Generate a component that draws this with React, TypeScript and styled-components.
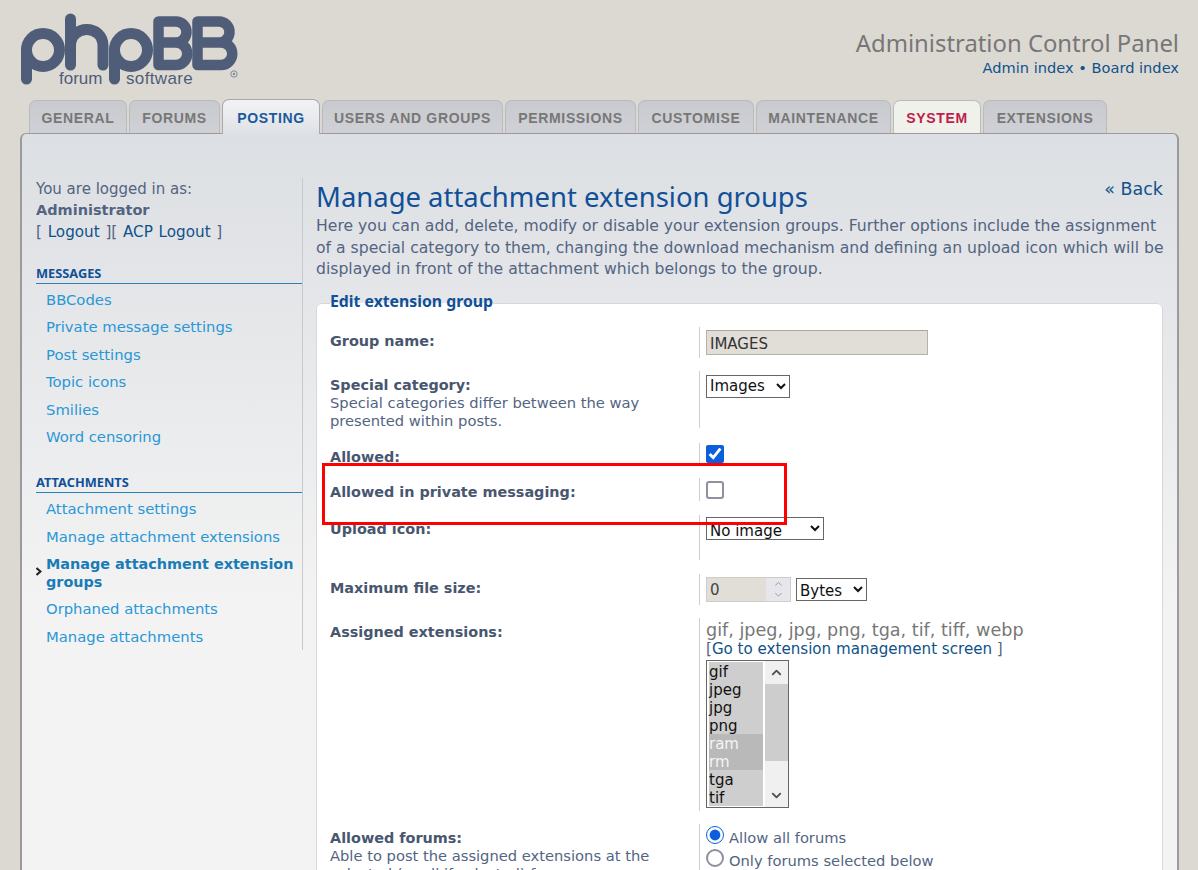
import React from 'react'
import styled, { createGlobalStyle } from 'styled-components'
import { ChevronUp, ChevronDown } from 'lucide-react'

const GlobalStyle = createGlobalStyle`
  html, body {
    margin: 0;
    padding: 0;
    height: 870px;
    overflow: hidden;
    background: #dcd9d3;
    font-family: "DejaVu Sans", Verdana, sans-serif;
    color: #536482;
  }
  * { box-sizing: border-box; }
  a { text-decoration: none; color: inherit; }
`

const Page = styled.div`
  position: relative;
  width: 1198px;
  height: 870px;
  overflow: hidden;
  padding: 0 19px 0 20px;
`

const Header = styled.header`
  display: flex;
  justify-content: space-between;
  height: 100px;
  padding-top: 13px;
`

const Logo = styled.svg`
  display: block;
  width: 225px;
  height: 76px;
`

const HeaderRight = styled.div`
  text-align: right;
  padding-top: 14px;
`

const SiteTitle = styled.div`
  font-family: "Noto Sans", "Open Sans", sans-serif;
  font-size: 23.85px;
  line-height: 32px;
  color: #777;
`

const SiteLinks = styled.div`
  font-size: 14.6px;
  line-height: 18px;
  color: #105289;
`

const Tabs = styled.nav`
  display: flex;
  gap: 2px;
  height: 33px;
  padding-left: 9px;
  position: relative;
  z-index: 1;
`

const Tab = styled.a<{ $active?: boolean; $system?: boolean; $w: number }>`
  display: block;
  width: ${(p) => p.$w}px;
  height: ${(p) => (p.$active ? 35 : 33)}px;
  margin-top: ${(p) => (p.$active ? -1 : 0)}px;
  text-align: center;
  font-family: "Liberation Sans", Arial, sans-serif;
  font-weight: bold;
  font-size: 14px;
  letter-spacing: 0.65px;
  line-height: ${(p) => (p.$active ? 36 : 34)}px;
  border-radius: 7px 7px 0 0;
  border: 1px solid #b9bbbf;
  border-bottom: 0;
  color: ${(p) => (p.$system ? '#bf1e4b' : p.$active ? '#1a5a9c' : '#777')};
  background: ${(p) =>
    p.$system
      ? '#f1f1ec'
      : p.$active
        ? 'linear-gradient(#f3f3f5, #dfe1e5)'
        : 'linear-gradient(#c9cace, #d0d1d6)'};
  ${(p) => p.$active && 'border-color: #a9a9a9;'}
`

const Panel = styled.div`
  display: flex;
  height: 780px;
  border: 1px solid #9b9b9b;
  border-left-width: 2px;
  border-right-width: 2px;
  border-bottom: 0;
  border-radius: 6px 6px 0 0;
  background: linear-gradient(#dcdfe3 0, #f3f3f3 470px);
  padding: 44px 14px 0 14px;
`

const Sidebar = styled.aside`
  width: 267px;
  height: 472px;
  border-right: 1px solid #c6c9ce;
  flex-shrink: 0;
`

const LoginBox = styled.div`
  font-size: 15px;
  line-height: 21.3px;
  margin-top: 1px;
  color: #536482;
  height: 85px;
`

const Strong = styled.strong`
  display: block;
  font-size: 14.5px;
`

const LoginLine = styled.div`
  font-size: 15.2px;
  word-spacing: 0.9px;
`

const LoginLink = styled.a`
  color: #105289;
`

const SideHead = styled.div`
  font-family: "Noto Sans", "Open Sans", sans-serif;
  font-weight: bold;
  font-size: 12.8px;
  line-height: 18px;
  height: 20px;
  text-transform: uppercase;
  color: #115098;
  border-bottom: 1px solid #2d7fb5;
  margin-bottom: 2px;
`

const SideList = styled.ul`
  list-style: none;
  margin: 0 0 23px;
  padding: 0;
`

const SideItem = styled.li<{ $active?: boolean }>`
  position: relative;
  padding: 5px 0 4px 10px;
  font-size: ${(p) => (p.$active ? 14.4 : 14.8)}px;
  line-height: ${(p) => (p.$active ? 18 : 18.4)}px;
  font-weight: ${(p) => (p.$active ? 'bold' : 'normal')};
  color: ${(p) => (p.$active ? '#1a7cb6' : '#2a97d6')};
`

const Marker = styled.svg`
  position: absolute;
  left: 0;
  top: 17px;
  width: 6px;
  height: 9px;
`

const Main = styled.main`
  flex: 1;
  padding-left: 13px;
  position: relative;
`

const BackLink = styled.a`
  position: absolute;
  right: 0;
  top: 1px;
  font-size: 17.5px;
  line-height: 20px;
  color: #105289;
`

const Title = styled.h1`
  margin: 0;
  font-family: "Noto Sans", "Open Sans", sans-serif;
  font-weight: normal;
  font-size: 27.45px;
  line-height: 37px;
  color: #115098;
`

const Intro = styled.p`
  margin: 0 -3px 11px 0;
  font-size: 15.65px;
  line-height: 21.5px;
  color: #536482;
`

const Fieldset = styled.fieldset`
  margin: 0;
  padding: 10px 13px 0 13px;
  background: #fff;
  border: 1px solid #d7d7d7;
  border-radius: 6px;
  min-width: 0;
`

const Legend = styled.legend`
  padding: 0 0 6px;
  font-family: "Noto Sans", "Open Sans", sans-serif;
  font-weight: bold;
  font-size: 15.8px;
  line-height: 20px;
  color: #115098;
`

const Row = styled.div<{ $h: number; $gap?: number }>`
  display: flex;
  height: ${(p) => p.$h}px;
  margin-bottom: ${(p) => p.$gap ?? 13}px;
`

const Term = styled.div`
  width: 369px;
  flex-shrink: 0;
  padding-top: 5px;
  line-height: 18px;
`

const Label = styled.label`
  display: block;
  font-weight: bold;
  font-size: 14.4px;
  color: #48566f;
`

const Explain = styled.span`
  display: block;
  width: 340px;
  font-size: 14.7px;
  line-height: 18px;
  color: #536482;
`

const Def = styled.div`
  flex: 1;
  border-left: 1px solid #cfcfcf;
  padding-left: 6px;
  font-size: 15px;
`

const TextInput = styled.input`
  display: block;
  width: 222px;
  height: 25px;
  margin-top: 3px;
  padding: 3px 3px 0;
  font: 15px "DejaVu Sans", sans-serif;
  color: #333;
  background: #e1ddd7;
  border: 1px solid #b5b2ac;
  border-top-color: #a9a6a0;
  border-radius: 0;
  outline: 0;
`

const Select = styled.select<{ $w: number; $top?: number; $textDrop?: number }>`
  display: block;
  width: ${(p) => p.$w}px;
  height: 23px;
  margin-top: ${(p) => p.$top ?? 3}px;
  padding: ${(p) => p.$textDrop ?? 0}px 0 0;
  text-indent: -1px;
  font: 15px "DejaVu Sans", sans-serif;
  color: #111;
  background-color: #fff;
  border: 1px solid #666;
  border-radius: 0;
`

const Check = styled.input<{ $top: number }>`
  display: block;
  width: 18px;
  height: 18px;
  margin: ${(p) => p.$top}px 0 0;
  accent-color: #0b5fdc;
  &:not(:checked) {
    appearance: none;
    background: #fff;
    border: 2px solid #8f8f9d;
    border-radius: 3px;
  }
`

const NumberRow = styled.div`
  display: flex;
  align-items: flex-start;
  gap: 5px;
  margin-top: 3px;
`

const NumberBox = styled.div`
  display: flex;
  width: 85px;
  height: 25px;
  border: 1px solid #cfcdc8;
  background: #e1ddd7;
  font-size: 15px;
  line-height: 24px;
  color: #444;
`

const NumberValue = styled.span`
  flex: 1;
  padding-left: 3px;
`

const Spin = styled.span`
  width: 24px;
  background: #e6e6ec;
  color: #9a9a9a;
  display: flex;
  flex-direction: column;
  align-items: center;
  justify-content: center;
  line-height: 0;
`

const ExtList = styled.div`
  font-size: 17.6px;
  line-height: 18px;
  color: #777;
  margin-top: 3px;
`

const ManageLine = styled.div`
  font-size: 15.1px;
  line-height: 20px;
  color: #536482;
`

const ManageLink = styled.a`
  color: #105289;
`

const ListBox = styled.div`
  display: flex;
  width: 83px;
  height: 148px;
  margin-top: 1px;
  border: 1px solid #666;
  background: #fff;
  overflow: hidden;
`

const Options = styled.div`
  width: 56px;
  padding: 1px 0 0 2px;
  flex-shrink: 0;
`

const Option = styled.div<{ $dark?: boolean }>`
  height: 18px;
  font-size: 15px;
  line-height: 20px;
  color: ${(p) => (p.$dark ? '#f4f4f4' : '#111')};
  background: ${(p) => (p.$dark ? '#b9b9b9' : '#cecece')};
`

const Scrollbar = styled.div`
  flex: 1;
  margin-left: 2px;
  background: #f0f0f0;
  display: flex;
  flex-direction: column;
  align-items: center;
  color: #505050;
`

const ScrollArrow = styled.span`
  height: 23px;
  display: flex;
  align-items: center;
  line-height: 0;
`

const ScrollThumb = styled.span`
  width: 100%;
  height: 77px;
  background: #cdcdcd;
  flex-shrink: 0;
`

const ScrollTrack = styled.span`
  flex: 1;
`

const RadioLine = styled.label`
  display: flex;
  align-items: flex-start;
  gap: 5px;
  height: 23px;
  padding-top: 5px;
  font-size: 14.7px;
  line-height: 18px;
  color: #536482;
`

const Radio = styled.input`
  width: 18px;
  height: 18px;
  margin: -3px 0 0;
  accent-color: #0b5fdc;
  &:not(:checked) {
    appearance: none;
    background: #fff;
    border: 2px solid #8f8f9d;
    border-radius: 50%;
  }
`

const Highlight = styled.div`
  position: absolute;
  left: 322px;
  top: 463px;
  width: 465px;
  height: 62px;
  border: 3px solid #f00;
  pointer-events: none;
`

const tabs = [
  { label: 'GENERAL', w: 98 },
  { label: 'FORUMS', w: 91 },
  { label: 'POSTING', w: 98, active: true },
  { label: 'USERS AND GROUPS', w: 181 },
  { label: 'PERMISSIONS', w: 131 },
  { label: 'CUSTOMISE', w: 116 },
  { label: 'MAINTENANCE', w: 135 },
  { label: 'SYSTEM', w: 88, system: true },
  { label: 'EXTENSIONS', w: 124 },
]

const messages = ['BBCodes', 'Private message settings', 'Post settings', 'Topic icons', 'Smilies', 'Word censoring']
const attachments = ['Attachment settings', 'Manage attachment extensions', 'Manage attachment extension groups', 'Orphaned attachments', 'Manage attachments']
const extOptions = ['gif', 'jpeg', 'jpg', 'png', 'ram', 'rm', 'tga', 'tif']

const PhpbbLogo = () => (
  <Logo viewBox="20 13 225 76" aria-label="phpBB forum software">
    <g fill="none" stroke="#4f5d78" strokeWidth="11" strokeLinecap="round" strokeLinejoin="round">
      <path d="M26.5 79V50" />
      <circle cx="43" cy="50" r="16.5" />
      <path d="M70.5 19V65" />
      <path d="M70.5 46c0-22 32.5-22 32.5 0V65" />
      <path d="M114.5 79V50" />
      <circle cx="131" cy="50" r="16.5" />
    </g>
    <g fill="none" stroke="#4f5d78" strokeWidth="10.5" strokeLinejoin="round">
      <path d="M158.5 21.5H176a10.5 10.5 0 0 1 0 21a11.2 11.2 0 0 1 0 22.5H158.5ZM158.5 42.5H176" />
      <path d="M197.5 21.5H219a10.5 10.5 0 0 1 0 21h2a11.2 11.2 0 0 1 0 22.5H197.5ZM197.5 42.5H221" />
    </g>
    <g fill="#4f5d78" fontFamily="'Liberation Sans', Arial, sans-serif" fontSize="17">
      <text x="59" y="84">forum</text>
      <text x="126" y="84" letterSpacing="0.35">software</text>
    </g>
    <circle cx="234" cy="74" r="3.2" fill="none" stroke="#7f8a9e" strokeWidth="1" />
    <circle cx="234" cy="74" r="1.2" fill="#7f8a9e" />
  </Logo>
)

export default function App() {
  return (
    <>
      <GlobalStyle />
      <Page>
        <Header>
          <PhpbbLogo />
          <HeaderRight>
            <SiteTitle>Administration Control Panel</SiteTitle>
            <SiteLinks>
              <a href="#">Admin index</a> • <a href="#">Board index</a>
            </SiteLinks>
          </HeaderRight>
        </Header>
        <Tabs>
          {tabs.map((t) => (
            <Tab key={t.label} href="#" $w={t.w} $active={t.active} $system={t.system}>
              {t.label}
            </Tab>
          ))}
        </Tabs>
        <Panel>
          <Sidebar>
            <LoginBox>
              You are logged in as:
              <Strong>Administrator</Strong>
              <LoginLine>
                [ <LoginLink href="#">Logout</LoginLink> ][ <LoginLink href="#">ACP Logout</LoginLink> ]
              </LoginLine>
            </LoginBox>
            <SideHead>Messages</SideHead>
            <SideList>
              {messages.map((m) => (
                <SideItem key={m}>{m}</SideItem>
              ))}
            </SideList>
            <SideHead>Attachments</SideHead>
            <SideList>
              {attachments.map((m, i) => (
                <SideItem key={m} $active={i === 2}>
                  {i === 2 && (
                    <Marker viewBox="0 0 6 9">
                      <path d="M0.5 1 4.5 4.5 0.5 8" fill="none" stroke="#222" strokeWidth="2" />
                    </Marker>
                  )}
                  {m}
                </SideItem>
              ))}
            </SideList>
          </Sidebar>
          <Main>
            <BackLink href="#">« Back</BackLink>
            <Title>Manage attachment extension groups</Title>
            <Intro>
              Here you can add, delete, modify or disable your extension groups. Further options include the assignment of a special category to them, changing the download mechanism and defining an upload icon which will be displayed in front of the attachment which belongs to the group.
            </Intro>
            <Fieldset>
              <Legend>Edit extension group</Legend>
              <Row $h={31}>
                <Term><Label>Group name:</Label></Term>
                <Def><TextInput defaultValue="IMAGES" /></Def>
              </Row>
              <Row $h={57} $gap={15}>
                <Term>
                  <Label>Special category:</Label>
                  <Explain>Special categories differ between the way presented within posts.</Explain>
                </Term>
                <Def>
                  <Select $w={84} $top={4} defaultValue="Images"><option>Images</option></Select>
                </Def>
              </Row>
              <Row $h={22}>
                <Term><Label>Allowed:</Label></Term>
                <Def><Check $top={2} type="checkbox" defaultChecked /></Def>
              </Row>
              <Row $h={23} $gap={14}>
                <Term><Label>Allowed in private messaging:</Label></Term>
                <Def><Check $top={3} type="checkbox" /></Def>
              </Row>
              <Row $h={45} $gap={14}>
                <Term><Label>Upload icon:</Label></Term>
                <Def>
                  <Select $w={118} $top={2} $textDrop={3} defaultValue="No image"><option>No image</option></Select>
                </Def>
              </Row>
              <Row $h={31}>
                <Term><Label>Maximum file size:</Label></Term>
                <Def>
                  <NumberRow>
                    <NumberBox>
                      <NumberValue>0</NumberValue>
                      <Spin>
                        <ChevronUp size={13} strokeWidth={2} />
                        <ChevronDown size={13} strokeWidth={2} />
                      </Spin>
                    </NumberBox>
                    <Select $w={71} $top={1} $textDrop={2} defaultValue="Bytes"><option>Bytes</option></Select>
                  </NumberRow>
                </Def>
              </Row>
              <Row $h={193}>
                <Term><Label>Assigned extensions:</Label></Term>
                <Def>
                  <ExtList>gif, jpeg, jpg, png, tga, tif, tiff, webp</ExtList>
                  <ManageLine>
                    [<ManageLink href="#">Go to extension management screen</ManageLink> ]
                  </ManageLine>
                  <ListBox>
                    <Options>
                      {extOptions.map((o) => (
                        <Option key={o} $dark={o === 'ram' || o === 'rm'}>{o}</Option>
                      ))}
                    </Options>
                    <Scrollbar>
                      <ScrollArrow><ChevronUp size={15} strokeWidth={3} /></ScrollArrow>
                      <ScrollThumb />
                      <ScrollTrack />
                      <ScrollArrow><ChevronDown size={15} strokeWidth={3} /></ScrollArrow>
                    </Scrollbar>
                  </ListBox>
                </Def>
              </Row>
              <Row $h={120}>
                <Term>
                  <Label>Allowed forums:</Label>
                  <Explain>Able to post the assigned extensions at the selected (or all if selected) forums.</Explain>
                </Term>
                <Def>
                  <RadioLine><Radio type="radio" name="forums" defaultChecked /> Allow all forums</RadioLine>
                  <RadioLine><Radio type="radio" name="forums" /> Only forums selected below</RadioLine>
                </Def>
              </Row>
            </Fieldset>
          </Main>
        </Panel>
        <Highlight />
      </Page>
    </>
  )
}
